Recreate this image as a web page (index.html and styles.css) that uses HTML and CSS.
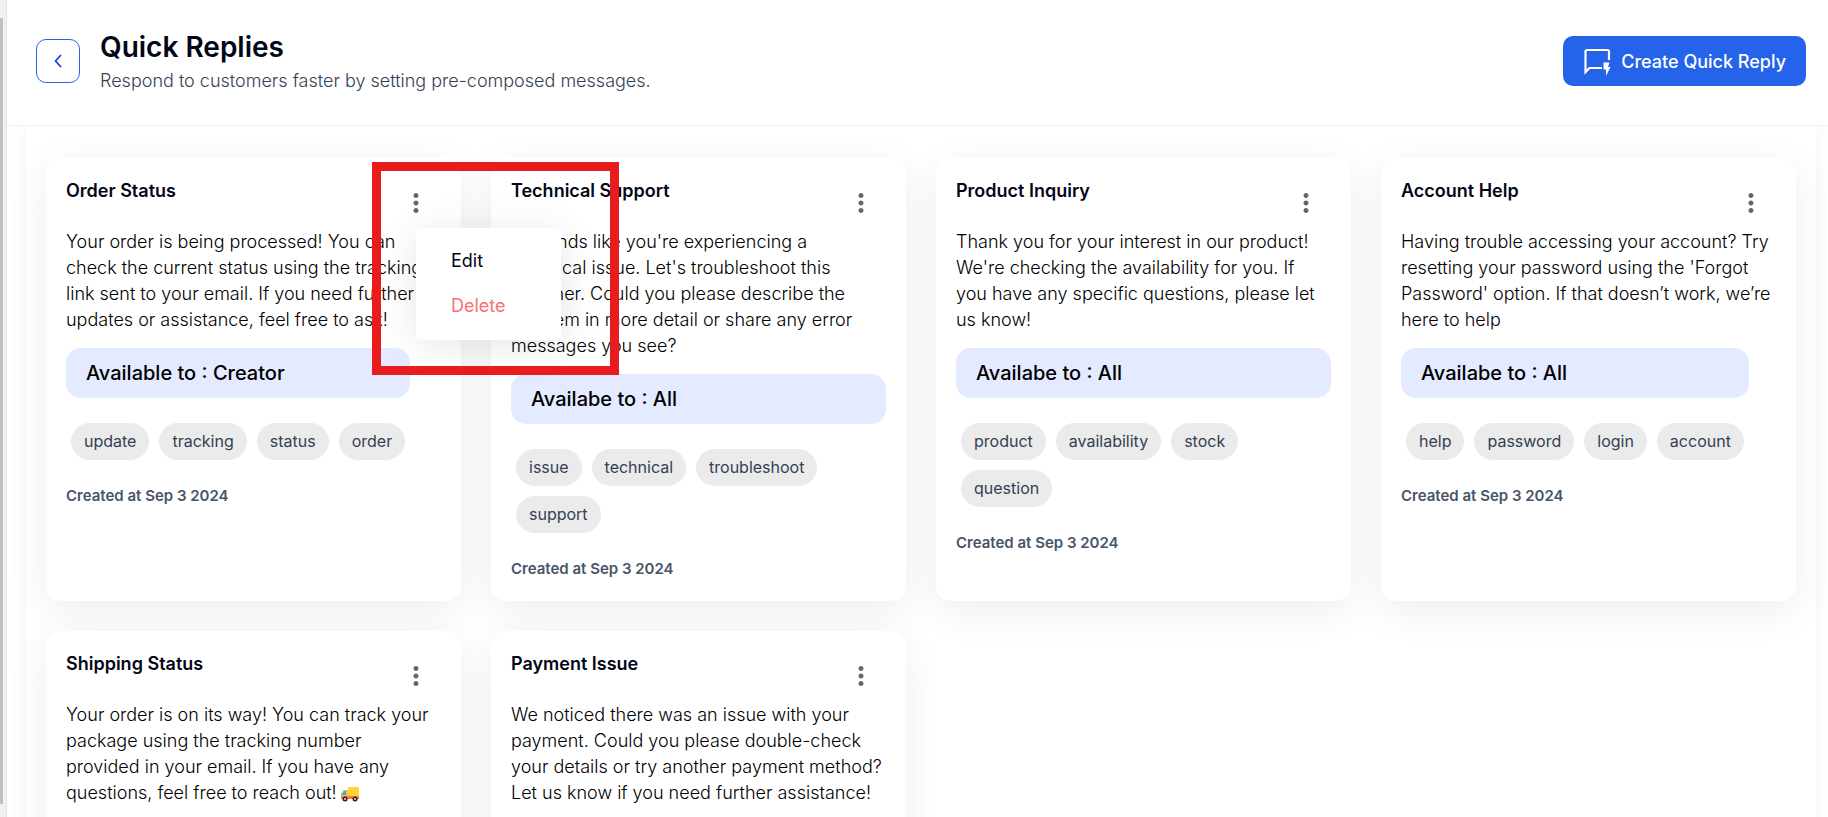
FILE: index.html
```html
<!DOCTYPE html>
<html lang="en">
<head>
<meta charset="utf-8">
<title>Quick Replies</title>
<link rel="stylesheet" href="styles.css">
</head>
<body>
<svg class="defs" aria-hidden="true">
  <symbol id="more" viewBox="0 0 24 24"><path d="M12 8c1.1 0 2-.9 2-2s-.9-2-2-2-2 .9-2 2 .9 2 2 2m0 2c-1.1 0-2 .9-2 2s.9 2 2 2 2-.9 2-2-.9-2-2-2m0 6c-1.1 0-2 .9-2 2s.9 2 2 2 2-.9 2-2-.9-2-2-2"/></symbol>
</svg>
<div class="app">
  <div class="scroll-track"><div class="scroll-thumb"></div></div>
  <div class="page">
    <header class="header">
      <button class="back" aria-label="Back">
        <svg width="20" height="20" viewBox="0 0 20 20"><path d="M12.500 4.500 7.500 10l5 5.500" fill="none" stroke="currentColor" stroke-width="1.800" stroke-linecap="round" stroke-linejoin="round"/></svg>
      </button>
      <div class="heading">
        <h1>Quick Replies</h1>
        <p>Respond to customers faster by setting pre-composed messages.</p>
      </div>
      <button class="create">
        <svg width="32" height="32" viewBox="0 0 32 32"><path d="M21 23H8.500L4.500 27V6.500Q4.500 5 6 5H26.500q1.500 0 1.500 1.500V15" fill="none" stroke="currentColor" stroke-width="2.200"/><path d="M22.500 17.500h6l-1.500 4.500H29.500L25 31v-6.500H22.500z" fill="currentColor"/></svg>
        Create Quick Reply
      </button>
    </header>
    <main class="content">
      <div class="panel">
        <article class="card">
          <div class="card-head"><h2>Order Status</h2>
            <div class="actions">
              <button class="more" aria-label="Options"><svg><use href="#more"/></svg></button>
              <div class="menu"><button class="item">Edit</button><button class="item danger">Delete</button></div>
              <div class="highlight"></div>
            </div>
          </div>
          <p class="message">Your order is being processed! You can check the current status using the tracking link sent to your email. If you need further updates or assistance, feel free to ask!</p>
          <div class="meta">
            <div class="access">Available to : Creator</div>
            <ul class="tags"><li>update</li><li>tracking</li><li>status</li><li>order</li></ul>
          </div>
          <p class="created">Created at Sep 3 2024</p>
        </article>
        <article class="card">
          <div class="card-head"><h2>Technical Support</h2>
            <div class="actions"><button class="more" aria-label="Options"><svg><use href="#more"/></svg></button></div>
          </div>
          <p class="message">It sounds like you're experiencing a technical issue. Let's troubleshoot this together. Could you please describe the problem in more detail or share any error messages you see?</p>
          <div class="meta">
            <div class="access">Availabe to : All</div>
            <ul class="tags"><li>issue</li><li>technical</li><li>troubleshoot</li><li>support</li></ul>
          </div>
          <p class="created">Created at Sep 3 2024</p>
        </article>
        <article class="card">
          <div class="card-head"><h2>Product Inquiry</h2>
            <div class="actions"><button class="more" aria-label="Options"><svg><use href="#more"/></svg></button></div>
          </div>
          <p class="message">Thank you for your interest in our product! We're checking the availability for you. If you have any specific questions, please let us know!</p>
          <div class="meta">
            <div class="access">Availabe to : All</div>
            <ul class="tags"><li>product</li><li>availability</li><li>stock</li><li>question</li></ul>
          </div>
          <p class="created">Created at Sep 3 2024</p>
        </article>
        <article class="card">
          <div class="card-head"><h2>Account Help</h2>
            <div class="actions"><button class="more" aria-label="Options"><svg><use href="#more"/></svg></button></div>
          </div>
          <p class="message">Having trouble accessing your account? Try resetting your password using the 'Forgot Password' option. If that doesn’t work, we’re here to help</p>
          <div class="meta">
            <div class="access">Availabe to : All</div>
            <ul class="tags"><li>help</li><li>password</li><li>login</li><li>account</li></ul>
          </div>
          <p class="created">Created at Sep 3 2024</p>
        </article>
        <article class="card">
          <div class="card-head"><h2>Shipping Status</h2>
            <div class="actions"><button class="more" aria-label="Options"><svg><use href="#more"/></svg></button></div>
          </div>
          <p class="message">Your order is on its way! You can track your package using the tracking number provided in your email. If you have any questions, feel free to reach out!<svg class="truck" viewBox="0 0 20 16" role="img" aria-label="truck"><path d="M8 1h10q1 0 1 1v9H8z" fill="#ffd23a"/><path d="M3.500 4H8v7H1V8z" fill="#ffc02e"/><path d="M3.800 5H6v4H1.500z" fill="#22b7f2"/><path d="M1 10h18v3H1z" fill="#ff7a2f"/><circle cx="5" cy="13" r="2.500" fill="#2b1d3a"/><circle cx="15" cy="13" r="2.500" fill="#2b1d3a"/><circle cx="5" cy="13" r="1" fill="#e6e0ee"/><circle cx="15" cy="13" r="1" fill="#e6e0ee"/></svg></p>
        </article>
        <article class="card">
          <div class="card-head"><h2>Payment Issue</h2>
            <div class="actions"><button class="more" aria-label="Options"><svg><use href="#more"/></svg></button></div>
          </div>
          <p class="message">We noticed there was an issue with your payment. Could you please double-check your details or try another payment method? Let us know if you need further assistance!</p>
        </article>
      </div>
    </main>
  </div>
</div>
</body>
</html>
```
FILE: styles.css
```css
* { box-sizing: border-box; }
body { margin: 0; font-family: Inter, "Liberation Sans", sans-serif; color: #020617; background: #fff; }
h1, h2, p, ul { margin: 0; padding: 0; }
button { font: inherit; cursor: pointer; }
.defs { display: none; }

.app { display: flex; height: 100vh; overflow: hidden; }
.scroll-track { flex: none; width: 7px; padding: 18px 3px 13px 0; background: #f1f1f1; border-right: 1px solid #e4e4e4; }
.scroll-thumb { height: 100%; background: #c1c1c1; }
.page { flex: 1; min-width: 0; display: flex; flex-direction: column; }

.header { flex: none; display: flex; align-items: center; gap: 20px; padding: 28px 22px 31px 29px; border-bottom: 1px solid #eee; background: #fff; }
.back { display: grid; place-items: center; width: 44px; height: 44px; padding: 0; border: 1px solid #2563eb; border-radius: 10px; background: #fff; color: #1d3fe0; }
.heading { flex: 1; }
.heading h1 { font-size: 28px; line-height: 38px; font-weight: 600; }
.heading p { padding-top: 2px; font-size: 18px; line-height: 26px; font-weight: 300; color: #334155; }
.create { display: flex; align-items: center; gap: 8px; height: 50px; padding: 0 20px 0 18px; border: 0; border-radius: 10px; background: #2563eb; color: #fff; font-size: 18px; font-weight: 500; }

.content { flex: 1; min-height: 0; padding: 0 12px 0 19px; overflow: hidden; }
.panel { display: grid; grid-template-columns: repeat(4, minmax(0, 1fr)); gap: 30px; min-height: 100%; padding: 32px 20px; background: #fff; box-shadow: 0 0 20px rgba(0, 0, 0, .05); }

.card { min-height: 240px; padding: 20px 20px 19px; border-radius: 15px; background: #fff; box-shadow: 0 10px 40px rgba(0, 0, 0, .07); }
.card-head { display: flex; justify-content: space-between; height: 50px; }
.card-head h2 { font-size: 18px; line-height: 26px; font-weight: 600; }
.actions { position: relative; width: 50px; height: 50px; }
.more { display: grid; place-items: center; width: 50px; height: 50px; padding: 0; border: 0; background: none; color: #666; }
.more svg { width: 30px; height: 30px; fill: currentColor; }
.menu { position: absolute; z-index: 2; top: 50px; left: 25px; display: flex; flex-direction: column; width: 145px; padding: 10px 0 12px; border-radius: 5px; background: #fff; box-shadow: 0 5px 40px rgba(0, 0, 0, .1); }
.item { height: 45px; padding: 0 35px; border: 0; background: none; text-align: left; font-size: 18px; color: #020617; }
.danger { color: #f87171; }
.highlight { position: absolute; z-index: 3; top: -16px; left: -19px; width: 247px; height: 213px; border: 9px solid #e81c1c; pointer-events: none; }

.message { padding: 1px 3px 0 0; font-size: 18px; line-height: 26px; font-weight: 300; color: #000; }
.truck { width: 20px; height: 16px; margin-left: 3px; vertical-align: -3px; }
.meta { width: fit-content; padding-top: 15px; }
.access { height: 50px; padding: 0 20px; border-radius: 15px; background: #e4eaff; color: #000; font-size: 20px; line-height: 50px; font-weight: 500; }
.tags { display: flex; flex-wrap: wrap; gap: 10px; padding: 25px 5px 23px; list-style: none; }
.tags li { padding: 0 13px; border-radius: 19px; background: #ebebeb; color: #334155; font-size: 16px; line-height: 37px; }
.created { font-size: 15px; line-height: 26px; font-weight: 600; color: #475569; }
```
